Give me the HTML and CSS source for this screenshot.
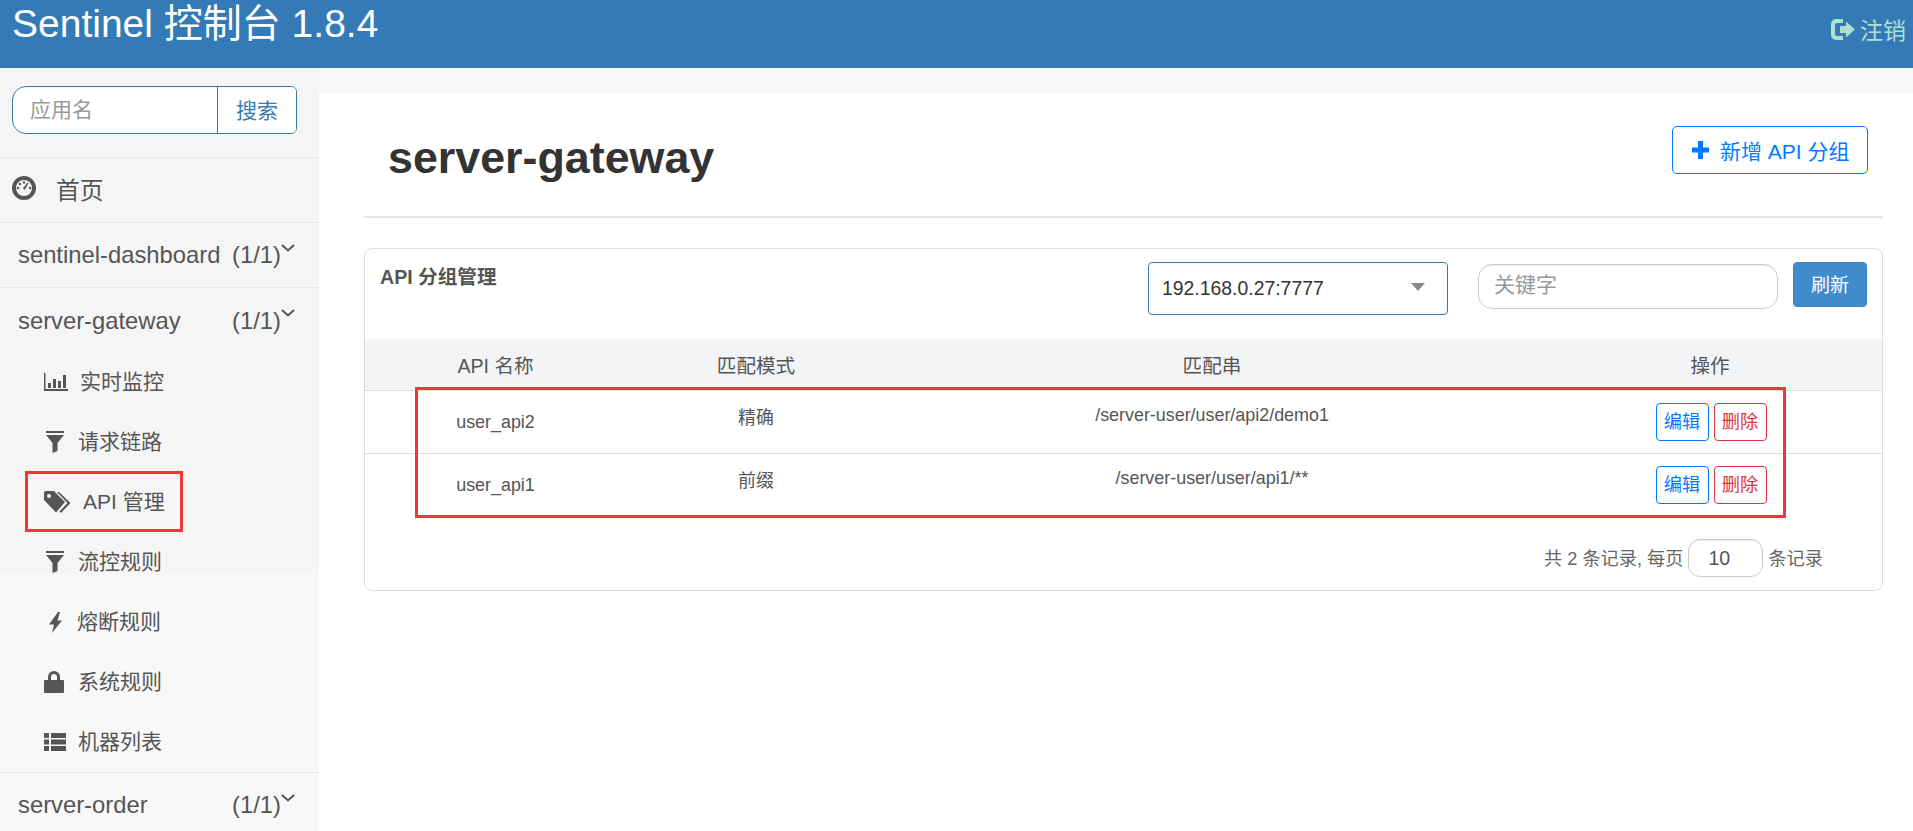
FILE: index.html
```html
<!DOCTYPE html>
<html lang="zh-CN">
<head>
    <meta charset="UTF-8">
    <title>Sentinel 控制台</title>
    <link rel="stylesheet" href="styles.css">
</head>
<body>
    <header class="topbar">
        <div class="brand">Sentinel 控制台 1.8.4</div>
        <a class="logout">
            <svg class="logout-icon" viewBox="0 0 25 21"><path d="M5 0h7v4H6a2 2 0 0 0-2 2v9a2 2 0 0 0 2 2h6v4H5a5 5 0 0 1-5-5V5a5 5 0 0 1 5-5z"/><path d="M9 7h6V2.500L24 10.500l-9 8V14H9z"/></svg>
            <span>注销</span>
        </a>
    </header>

    <div class="layout">
        <aside class="sidebar">
            <div class="app-search">
                <input type="text" placeholder="应用名">
                <button>搜索</button>
            </div>
            <div class="nav-row home">
                <svg class="home-icon" viewBox="0 0 24 24"><circle cx="12" cy="12" r="10" fill="none" stroke="#555" stroke-width="4"/><circle cx="6" cy="12" r="1.200"/><circle cx="8" cy="8" r="1.200"/><circle cx="12" cy="6.500" r="1.200"/><circle cx="18" cy="12" r="1.200"/><path d="M10.800 12.500L15.500 6.500l1 .6-3.500 6.600z"/></svg>
                <span>首页</span>
            </div>
            <div class="nav-row app">
                <span class="app-name">sentinel-dashboard</span>
                <span class="app-count">(1/1)</span>
                <svg class="chevron" viewBox="0 0 14 8"><path d="M1 1l6 5.500L13 1" fill="none" stroke="#555" stroke-width="2"/></svg>
            </div>
            <div class="nav-row app open">
                <span class="app-name">server-gateway</span>
                <span class="app-count">(1/1)</span>
                <svg class="chevron" viewBox="0 0 14 8"><path d="M1 1l6 5.500L13 1" fill="none" stroke="#555" stroke-width="2"/></svg>
            </div>
            <ul class="sub-nav">
                <li>
                    <svg class="ico-chart" viewBox="0 0 24 18"><path d="M0 0h1.500v16H24v2H0z"/><path d="M4 10h3v5H4zM9 6h3v9H9zM14 8h3v7h-3zM19 2h3v13h-3z"/></svg>
                    <span>实时监控</span>
                </li>
                <li>
                    <svg class="ico-filter" viewBox="0 0 18 22"><path d="M0 0h18v2H0zM0 4h18l-6.500 8v8l-5 2V12z"/></svg>
                    <span>请求链路</span>
                </li>
                <li>
                    <svg class="ico-tags" viewBox="0 0 27 22"><path d="M2 0h8l11 11-9 10.500L0 9V2a2 2 0 0 1 2-2zm3 3a2 2 0 1 0 0 4 2 2 0 0 0 0-4z" fill-rule="evenodd"/><path d="M15 1l11.500 11L17 22l-1.500-1.500L23.500 12 13 1z"/></svg>
                    <span>API 管理</span>
                </li>
                <li>
                    <svg class="ico-filter" viewBox="0 0 18 22"><path d="M0 0h18v2H0zM0 4h18l-6.500 8v8l-5 2V12z"/></svg>
                    <span>流控规则</span>
                </li>
                <li>
                    <svg class="ico-bolt" viewBox="0 0 14 21"><path d="M10 0L1 12.500h5L4 21 14 8.500H9.500L12 0z"/></svg>
                    <span>熔断规则</span>
                </li>
                <li>
                    <svg class="ico-lock" viewBox="0 0 20 22"><path d="M4 9V6a6 6 0 0 1 12 0v3h3a1 1 0 0 1 1 1v11a1 1 0 0 1-1 1H1a1 1 0 0 1-1-1V10a1 1 0 0 1 1-1zm3 0h6V6a3 3 0 0 0-6 0z" fill-rule="evenodd"/></svg>
                    <span>系统规则</span>
                </li>
                <li>
                    <svg class="ico-list" viewBox="0 0 22 18"><path d="M0 0h5v5H0zM7 0h15v5H7zM0 6.500h5v5H0zM7 6.500h15v5H7zM0 13h5v5H0zM7 13h15v5H7z"/></svg>
                    <span>机器列表</span>
                </li>
            </ul>
            <div class="nav-row app last">
                <span class="app-name">server-order</span>
                <span class="app-count">(1/1)</span>
                <svg class="chevron" viewBox="0 0 14 8"><path d="M1 1l6 5.500L13 1" fill="none" stroke="#555" stroke-width="2"/></svg>
            </div>
        </aside>

        <main class="content">
            <div class="page-head">
                <h1>server-gateway</h1>
                <button class="btn-add">
                    <svg viewBox="0 0 17 18"><path d="M6 0h5v6.500h6v5h-6V18H6v-6.500H0v-5h6z"/></svg>
                    <span>新增 API 分组</span>
                </button>
            </div>
            <hr class="divider">

            <section class="panel">
                <div class="panel-head">
                    <h2>API 分组管理</h2>
                    <div class="machine-select">
                        <span>192.168.0.27:7777</span>
                        <i class="caret"></i>
                    </div>
                    <input class="keyword" type="text" placeholder="关键字">
                    <button class="btn-refresh">刷新</button>
                </div>
                <table class="api-table">
                    <colgroup>
                        <col class="col-name">
                        <col class="col-mode">
                        <col class="col-match">
                        <col>
                    </colgroup>
                    <thead>
                        <tr>
                            <th>API 名称</th>
                            <th>匹配模式</th>
                            <th>匹配串</th>
                            <th>操作</th>
                        </tr>
                    </thead>
                    <tbody>
                        <tr>
                            <td class="name">user_api2</td>
                            <td class="raised">精确</td>
                            <td class="raised">/server-user/user/api2/demo1</td>
                            <td class="actions"><button class="btn-edit">编辑</button><button class="btn-del">删除</button></td>
                        </tr>
                        <tr>
                            <td class="name">user_api1</td>
                            <td class="raised">前缀</td>
                            <td class="raised">/server-user/user/api1/**</td>
                            <td class="actions"><button class="btn-edit">编辑</button><button class="btn-del">删除</button></td>
                        </tr>
                    </tbody>
                </table>
                <div class="pager">
                    <span>共 2 条记录, 每页</span>
                    <input type="text" value="10">
                    <span>条记录</span>
                </div>
            </section>
        </main>
    </div>

    <!-- red annotation boxes drawn on the screenshot -->
    <div class="mark mark-nav"></div>
    <div class="mark mark-rows"></div>
</body>
</html>
```

FILE: styles.css
```css
*{
    margin: 0;
    padding: 0;
    box-sizing: border-box;
    font-family: "Liberation Sans", "Noto Sans CJK SC", sans-serif;
}
body{
    background: #f8f8f8;
    height: 831px;
    overflow: hidden;
    color: #555;
}
button, input{
    outline: 0;
}

/* top bar */
.topbar{
    height: 68px;
    background: #337ab7;
    display: flex;
    justify-content: space-between;
    padding: 0 7px 0 12px;
}
.brand{
    color: #fff;
    font-size: 39px;
    line-height: 48px;
}
.logout{
    display: flex;
    align-items: center;
    gap: 4px;
    height: 58px;
    color: #aee0d2;
    font-size: 23px;
}
.logout-icon{
    width: 25px;
    height: 21px;
    fill: #aee0d2;
}

.layout{
    display: flex;
    height: 763px;
}

/* sidebar */
.sidebar{
    width: 319px;
    flex-shrink: 0;
    background: linear-gradient(#f5f5f5 506px, #f8f8f8 506px);
}
.app-search{
    display: flex;
    height: 48px;
    margin: 18px 22px 23px 12px;
    border: 1px solid #337ab7;
    border-radius: 14px 6px 6px 14px;
    background: #fff;
    overflow: hidden;
}
.app-search input{
    flex: 1;
    min-width: 0;
    border: 0;
    padding: 0 0 1px 17px;
    font-size: 21px;
    background: transparent;
}
.app-search input::placeholder, .keyword::placeholder{
    color: #999;
}
.app-search button{
    width: 79px;
    border: 0;
    border-left: 1px solid #337ab7;
    background: #fff;
    color: #337ab7;
    font-size: 21px;
    padding-bottom: 2px;
}
.nav-row{
    display: flex;
    align-items: center;
    height: 65px;
    border-top: 1px solid #e7e7e7;
    font-size: 23.8px;
}
.home{
    padding: 0 0 4px 12px;
    gap: 20px;
}
.home-icon{
    width: 24px;
    height: 24px;
    fill: #555;
}
.app{
    padding-left: 18px;
}
.app-name{
    width: 214px;
}
.app-count{
    width: 49px;
}
.chevron{
    width: 14px;
    height: 8px;
    margin-top: -14px;
}
.app.open{
    padding-top: 2px;
}
.app.open .chevron{
    margin-top: -16px;
}
.app.last{
    height: 59px;
    padding-top: 6px;
}

.sub-nav{
    list-style: none;
}
.sub-nav li{
    display: flex;
    align-items: center;
    height: 60px;
    font-size: 21px;
    padding-left: 44px;
}
.sub-nav span{
    padding-bottom: 5px;
}
.sub-nav svg{
    fill: #555;
    flex-shrink: 0;
}
.ico-chart{ width: 24px; height: 18px; margin-right: 13px; }
.ico-filter{ width: 18px; height: 22px; margin-left: 2px; margin-right: 14px; }
.ico-tags{ width: 27px; height: 22px; margin-right: 12px; }
.ico-bolt{ width: 14px; height: 21px; margin-left: 4px; margin-right: 15px; }
.ico-lock{ width: 20px; height: 22px; margin-right: 14px; }
.ico-list{ width: 22px; height: 18px; margin-right: 12px; }
.sub-nav li:first-child span{
    margin-left: -1px;
}

/* main area */
.content{
    flex: 1;
    margin-top: 25px;
    background: #fff;
    padding: 33px 30px 0 45px;
}
.page-head{
    display: flex;
    align-items: center;
    justify-content: space-between;
    height: 48px;
    padding: 0 15px 0 24px;
}
.page-head h1{
    font-size: 44.8px;
    font-weight: 700;
    color: #333;
    padding-top: 15px;
}
.btn-add{
    display: flex;
    align-items: center;
    gap: 11px;
    width: 196px;
    height: 48px;
    padding-left: 19px;
    border: 1px solid #007bff;
    border-radius: 5px;
    background: #fff;
    color: #007bff;
    font-size: 21px;
}
.btn-add svg{
    width: 17px;
    height: 18px;
    fill: #007bff;
}
.divider{
    border: 0;
    height: 2px;
    background: #e5e5e5;
    margin: 42px 0 30px;
}

.panel{
    height: 343px;
    border: 1px solid #ddd;
    border-radius: 8px;
}
.panel-head{
    display: flex;
    align-items: flex-start;
    height: 90px;
    padding: 13px 15px 0 15px;
}
.panel-head h2{
    font-size: 19.6px;
    line-height: 30px;
    font-weight: 700;
    color: #555;
    margin-right: auto;
}
.machine-select{
    display: flex;
    align-items: center;
    justify-content: space-between;
    width: 300px;
    height: 53px;
    padding: 0 22px 0 13px;
    border: 1px solid #337ab7;
    border-radius: 4px;
    font-size: 19.4px;
    color: #333;
}
.caret{
    width: 0;
    height: 0;
    border-left: 7px solid transparent;
    border-right: 7px solid transparent;
    border-top: 8px solid #888;
    margin-top: -3px;
}
.keyword{
    width: 300px;
    height: 45px;
    margin: 2px 15px 0 30px;
    padding: 0 0 3px 15px;
    border: 1px solid #ccc;
    border-radius: 14px;
    box-shadow: inset 0 1px 1px rgba(0,0,0,.075);
    font-size: 21px;
}
.btn-refresh{
    width: 74px;
    height: 45px;
    border: 1px solid #3e85c5;
    border-radius: 4px;
    background: #428bca;
    color: #fff;
    font-size: 19px;
    padding-bottom: 2px;
}

.api-table{
    width: 100%;
    border-collapse: collapse;
    table-layout: fixed;
}
.col-name{ width: 261px; }
.col-mode{ width: 260px; }
.col-match{ width: 652px; }
.api-table th{
    height: 51px;
    background: #f3f4f6;
    border-bottom: 1px solid #ddd;
    font-size: 19.6px;
    font-weight: 400;
    color: #555;
}
.api-table td{
    height: 63px;
    text-align: center;
    font-size: 17.9px;
    color: #555;
}
.api-table tbody tr:first-child td{
    border-bottom: 1px solid #ddd;
}
.api-table td.name{
    padding-top: 2px;
}
.api-table td.raised{
    padding-bottom: 12px;
}
.actions{
    padding-left: 2px;
}
.actions button{
    width: 53px;
    height: 38px;
    background: #fff;
    border-radius: 4px;
    font-size: 18.2px;
    vertical-align: middle;
    padding-bottom: 3px;
}
.btn-edit{
    border: 1px solid #007bff;
    color: #007bff;
    margin-right: 5px;
}
.btn-del{
    border: 1px solid #dc3545;
    color: #dc3545;
}

.pager{
    display: flex;
    align-items: center;
    justify-content: flex-end;
    gap: 5px;
    margin-top: 23px;
    padding-right: 59px;
    font-size: 18.2px;
    color: #666;
}
.pager span{
    padding-bottom: 3px;
}
.pager input{
    width: 75px;
    height: 38px;
    padding-left: 19px;
    border: 1px solid #ccc;
    border-radius: 12px;
    box-shadow: inset 0 1px 1px rgba(0,0,0,.075);
    font-size: 19.6px;
    color: #555;
}

/* annotations */
.mark{
    position: absolute;
    border: 3px solid #f33535;
    pointer-events: none;
}
.mark-nav{
    left: 25px;
    top: 471px;
    width: 158px;
    height: 61px;
}
.mark-rows{
    left: 415px;
    top: 387px;
    width: 1371px;
    height: 131px;
}
```
